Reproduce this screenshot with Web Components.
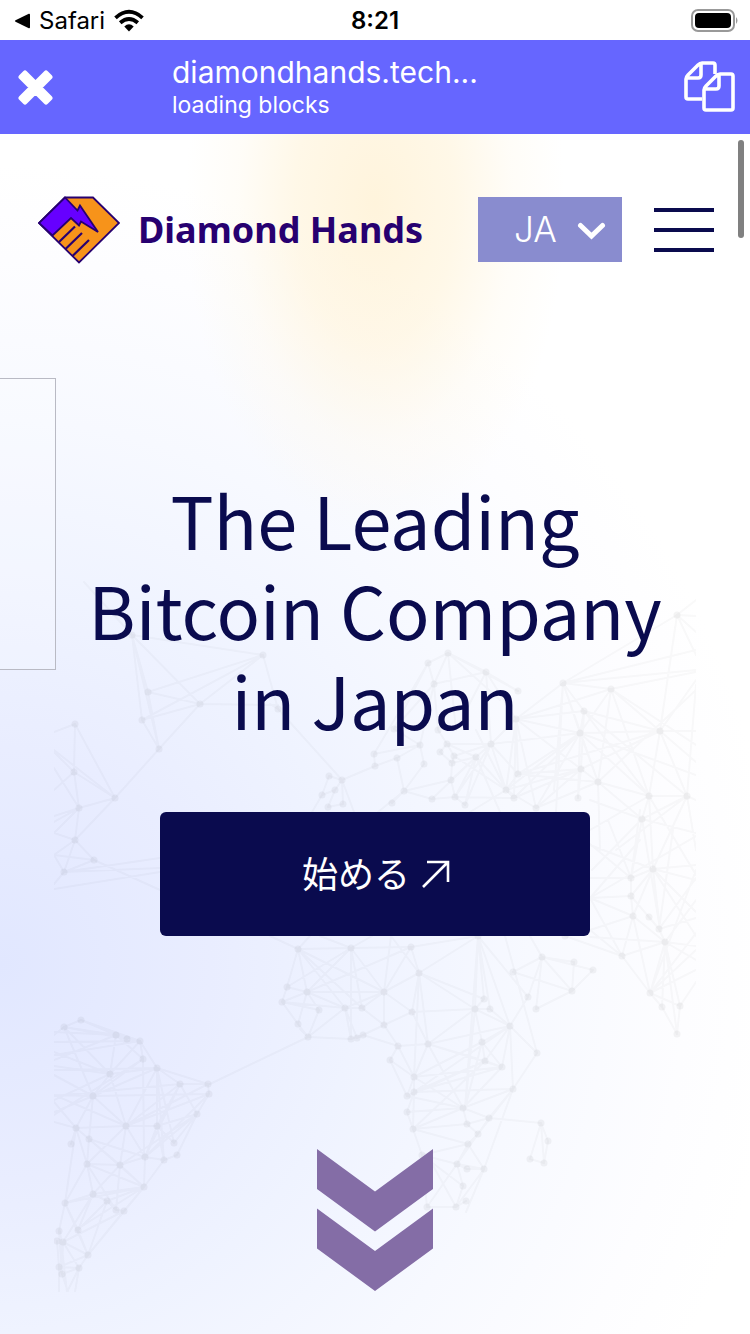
<!DOCTYPE html>
<html lang="ja">
<head>
<meta charset="utf-8">
<meta name="viewport" content="width=device-width, initial-scale=1">
<title>Diamond Hands</title>
<style>
  body { margin: 0; font-family: Inter, "Noto Sans CJK JP", sans-serif; background: #fff; color: #0a0b4e; }
</style>
</head>
<body>
<phone-screen>
  <status-bar></status-bar>
  <browser-bar><span slot="address">diamondhands.tech...</span><span slot="state">loading blocks</span></browser-bar>
  <hero-section>
    <world-map slot="backdrop"></world-map>
    <site-header slot="header">Diamond Hands</site-header>
    <span slot="title">The Leading Bitcoin Company in Japan</span>
    <start-button slot="action">始める</start-button>
    <scroll-hint slot="hint"></scroll-hint>
  </hero-section>
</phone-screen>
<script>
const define = (name, html) => {
  const template = document.createElement('template');
  template.innerHTML = html;
  customElements.define(name, class extends HTMLElement {
    constructor() {
      super();
      this.attachShadow({ mode: 'open' }).append(template.content.cloneNode(true));
    }
  });
};

define('phone-screen', `
<style>:host { display: flex; flex-direction: column; min-height: 100vh; } </style>
<slot></slot>`);

define('status-bar', `
<style>
  :host { display: grid; grid-template-columns: 1fr auto 1fr; align-items: center; height: 40px; padding: 0 11px; color: #000; font-size: 24px; line-height: 42px; }
  .back { display: flex; align-items: center; gap: 8px; padding-left: 3px; }
  .time { font-weight: 600; }
  .battery { justify-self: end; }
  svg { display: block; }
</style>
<div class="back">
  <svg width="17" height="16" viewBox="0 0 17 16"><path d="M1.5 7.2 14.8.8Q16 .4 16 1.800V14.200Q16 15.600 14.800 15.200L1.500 8.800Q.2 8 1.500 7.200Z"/></svg>
  <span>Safari</span>
  <svg width="32" height="24" viewBox="0 0 32 24"><g fill="none" stroke="#000" stroke-width="3.800"><path d="M2.500 8.800Q16-3.200 29.500 8.800"/><path d="M7.200 13.800Q16 6.200 24.800 13.800"/></g><path d="M11.300 17.400Q16 13.200 20.700 17.400L16 22.600Z"/></svg>
</div>
<span class="time">8:21</span>
<svg class="battery" width="48" height="24" viewBox="0 0 48 24"><rect x="1" y="1" width="42" height="21" rx="6" fill="none" stroke="#999" stroke-width="2"/><rect x="4" y="4" width="36" height="15" rx="4"/><path d="M45 8q3 3.500 0 7Z" fill="#999"/></svg>`);

define('browser-bar', `
<style>
  :host { display: flex; align-items: center; height: 94px; padding: 0 15px 0 18px; background: #66f; color: #fff; }
  button { display: block; border: 0; padding: 0; background: none; color: inherit; }
  svg { display: block; }
  .page { flex: 1; margin-left: 119px; }
  .address { font-size: 30px; line-height: 36px; }
  .state { font-size: 23px; line-height: 30px; }
</style>
<button aria-label="Close"><svg width="35" height="35" viewBox="0 0 35 35"><path d="M7 3 17.500 13.500 28 3 32 7 21.500 17.500 32 28 28 32 17.500 21.500 7 32 3 28 13.500 17.500 3 7Z" fill="#fff" stroke="#fff" stroke-width="5" stroke-linejoin="round"/></svg></button>
<div class="page"><div class="address"><slot name="address"></slot></div><div class="state"><slot name="state"></slot></div></div>
<button aria-label="Tabs"><svg width="51" height="53" viewBox="0 0 51 53" fill="none" stroke="#fff" stroke-width="3.600" stroke-linejoin="round"><path d="M18 38H4Q2 38 2 36V18Q2 16 4 14L14 4Q16 2 18 2H29Q31 2 31 4V13M2 17H14Q17 17 17 14V2"/><path d="M49 15Q49 13 47 13H36Q34 13 32 15L22 25Q20 27 20 29V47Q20 49 22 49H47Q49 49 49 47ZM20 28H32Q35 28 35 25V13"/></svg></button>`);

define('hero-section', `
<style>
  :host { display: grid; flex: 1; position: relative; overflow: hidden;
    background:
      radial-gradient(ellipse 190px 330px at 375px 70px, rgba(255,242,214,.85), rgba(255,243,216,.6) 42%, rgba(255,246,226,.26) 72%, rgba(255,250,240,0)),
      radial-gradient(ellipse 780px 800px at 0 830px, #e1e7ff, #e9edff 27%, #eff3ff 46%, #f7f9ff 68%, #fdfdff 88%, #fff); }
  .content, .backdrop, .frame { grid-area: 1 / 1; min-width: 0; }
  .backdrop { margin: 446px 54px 0; }
  .frame { box-sizing: border-box; justify-self: start; align-self: start; width: 56px; height: 292px; margin-top: 244px; border: 1px solid #b9bac4; border-left: 0; background: rgba(255,255,255,.2); }
  .content { display: flex; flex-direction: column; align-items: center; padding: 62px 0 43px; z-index: 1; }
  .header { align-self: stretch; }
  h1 { box-sizing: border-box; max-width: 640px; margin: 211px 0 68px; font: 400 72px/90px "Noto Sans CJK JP", sans-serif; text-align: center; }
  .hint { margin-top: auto; padding-top: 48px; }
  .scrollbar { position: absolute; top: 6px; right: 6px; width: 6px; height: 98px; border-radius: 3px; background: #808080; z-index: 2; }
</style>
<div class="backdrop"><slot name="backdrop"></slot></div>
<div class="frame"></div>
<div class="content">
  <div class="header"><slot name="header"></slot></div>
  <h1><slot name="title"></slot></h1>
  <slot name="action"></slot>
  <div class="hint"><slot name="hint"></slot></div>
</div>
<div class="scrollbar"></div>`);

define('site-header', `
<style>
  :host { display: flex; align-items: center; height: 67px; padding: 0 36px 0 38px; }
  a { display: flex; align-items: center; gap: 18px; margin-right: auto; color: #270070; text-decoration: none; font: 700 36px/68px "Noto Sans", sans-serif; white-space: nowrap; }
  svg { display: block; }
  .language { display: grid; align-items: center; width: 144px; height: 65px; background: #898ccf; color: #fff; }
  select { grid-area: 1 / 1; appearance: none; width: 100%; height: 100%; margin: 0; padding: 0 36px; border: 0; border-radius: 0; background: none; color: inherit; font: 300 35px/65px Inter, sans-serif; }
  .language svg { grid-area: 1 / 1; justify-self: end; margin-right: 16px; pointer-events: none; }
  .menu { display: flex; flex-direction: column; gap: 16px; width: 60px; margin-left: 32px; padding: 0; border: 0; background: none; }
  .menu i { display: block; width: 100%; height: 4px; background: #0a0b4e; }
</style>
<a href="#">
  <svg width="82" height="68" viewBox="0 0 82 68" stroke="#270070" stroke-width="1.800" stroke-linejoin="miter"><path d="M27 1.500H55L81 27 41 66.500 1 27Z" fill="#f7931a"/><path d="M27 1.500 1 27 14.500 39.500 33 22 41 29.500 43 25.500 60 36 42 9.500 39.500 14.500Z" fill="#60f"/><path d="M21 46 37 30.500M27.500 53 44 37M34.500 60 51 44" fill="none" stroke-width="2.200"/></svg>
  <slot></slot>
</a>
<div class="language">
  <select aria-label="Language"><option>JA</option><option>EN</option></select>
  <svg width="29" height="20" viewBox="0 0 29 20"><path d="M3.500 5.500 14.500 16 25.500 5.500" fill="none" stroke="#fff" stroke-width="5" stroke-linecap="round"/></svg>
</div>
<button class="menu" aria-label="Menu"><i></i><i></i><i></i></button>`);

define('start-button', `
<style>
  :host { display: block; }
  button { box-sizing: border-box; display: flex; align-items: center; justify-content: center; gap: 12px; width: 430px; max-width: 100vw; height: 124px; padding: 0 0 4px 2px; border: 0; border-radius: 6px; background: #0a0b4e; color: #fff; font: 400 36px/52px "Noto Sans CJK JP", sans-serif; }
  svg { display: block; margin-top: 4px; }
</style>
<button><slot></slot><svg width="28" height="28" viewBox="0 0 28 28"><path d="M1 27 26 2M5 2H26V22" fill="none" stroke="#fff" stroke-width="2.600"/></svg></button>`);

define('scroll-hint', `
<style>:host { display: block; } svg { display: block; }</style>
<svg width="118" height="142" viewBox="0 0 118 142" fill="#846da6"><path d="M1 0 59 42.500 117 0V40L59 82.500 1 40ZM1 59.500 59 102 117 59.500V99.500L59 142 1 99.500Z"/></svg>`);

/* Network map: each row is a hub followed by the points it is joined to. */
const links = [
  // North America
  [132,635, 84,582, 263,655, 148,692, 142,720, 159,749, 200,704],
  [263,655, 148,692, 142,720, 200,704], [200,704, 148,692, 142,720, 159,749, 278,705],
  [159,749, 142,720, 148,692, 115,798], [75,724, 54,732, 74,772, 115,798],
  [74,772, 54,752, 54,790, 79,808, 115,798], [79,808, 54,768, 54,816, 54,822, 54,833, 75,840, 115,798],
  [75,840, 54,833, 54,855, 64,872, 94,860, 115,798], [94,860, 54,855, 64,872, 160,890],
  [64,872, 54,855, 54,884, 160,858, 160,868], [54,889, 160,872], [115,798, 54,750],
  [278,709, 263,655, 270,704, 342,780],
  // Europe
  [448,653, 428,663, 486,672, 434,684, 456,730, 518,691, 500,700], [428,663, 374,754, 434,684, 394,729],
  [486,672, 434,684, 518,691, 516,719, 456,730], [434,684, 394,729, 420,745, 438,730],
  [420,745, 374,754, 397,758, 424,764, 394,729], [375,766, 374,754, 397,758, 342,780],
  [404,791, 397,758, 424,764, 392,803, 378,812, 451,780, 432,799],
  [342,780, 329,776, 335,790, 343,804, 354,812], [322,795, 329,776, 335,790, 312,812], [328,807, 335,790, 343,804],
  [447,744, 438,730, 440,752, 454,756, 491,744, 476,757], [452,763, 454,756, 440,752, 451,780, 476,757],
  [491,744, 486,672, 516,719, 476,757, 518,774, 506,790, 465,805, 455,797, 454,756, 580,733],
  [476,757, 455,797, 465,805, 451,780, 506,790, 432,799, 500,812], [455,797, 451,780, 432,799, 465,805, 514,798],
  [506,790, 518,774, 514,798, 476,730, 516,719, 581,769, 470,812, 536,808, 580,733, 454,756],
  // Asia
  [677,615, 696,600, 696,616, 563,683, 696,655, 696,632, 660,731], [563,683, 696,650, 696,670, 611,689, 584,711, 580,733, 516,719, 598,782, 554,790, 556,812],
  [611,689, 696,672, 516,719, 580,733, 660,731, 696,745, 598,782, 649,796],
  [584,711, 516,719, 580,733, 581,769, 660,731, 649,796, 687,796], [660,731, 580,733, 696,680, 696,731, 696,762, 649,796, 687,796, 518,774, 581,769],
  [580,733, 516,719, 518,774, 514,798, 598,782, 578,798, 696,775, 536,808, 649,796],
  [516,719, 518,774, 514,798, 581,769, 536,808, 491,744], [581,769, 518,774, 578,798, 598,782, 514,798, 536,808],
  [598,782, 518,774, 649,796, 536,808, 642,819, 696,690, 600,850], [649,796, 687,796, 642,819, 590,830, 653,869, 696,875],
  [687,796, 696,685, 696,800, 642,819, 653,869, 671,830, 696,850, 616,850], [642,819, 590,800, 696,833, 592,870, 631,878, 660,929],
  [653,869, 590,845, 631,878, 631,896, 660,929, 696,865, 696,880, 696,912, 633,916, 696,936],
  [631,878, 590,844, 590,878, 631,896, 608,820, 640,810], [590,898, 631,896, 633,916, 622,956, 640,840, 696,836],
  [633,916, 590,930, 631,896, 622,956, 650,993, 665,942], [659,929, 649,917, 673,830, 696,878, 696,918, 631,896, 665,942],
  [665,942, 590,937, 622,956, 650,993, 662,1007, 677,1034, 696,946, 696,960, 696,900], [650,993, 622,956, 662,1007, 696,950, 696,970, 680,1006],
  [680,1006, 665,942, 677,1034, 696,982], [662,1007, 677,1034], [622,956, 565,936, 590,898, 590,930], [650,993, 696,870, 696,933],
  // Arabia and Africa
  [542,957, 513,972, 528,997, 536,1009, 574,962, 593,970, 572,991, 530,936], [572,991, 574,962, 513,972, 593,970, 536,1009, 542,957],
  [298,949, 270,936, 287,987, 307,992, 310,936, 345,1008, 362,1008, 384,992, 351,948],
  [351,948, 307,992, 287,987, 384,992, 351,1039, 362,1008, 410,947, 320,936, 372,936],
  [411,947, 307,992, 384,992, 419,973, 478,936], [287,987, 282,1002, 307,992],
  [307,992, 282,1002, 319,1010, 384,992, 298,1024], [282,1002, 298,1024, 319,1010, 345,1008],
  [308,1037, 300,1029, 345,1008, 319,1010, 298,1024, 351,1039, 210,1084], [345,1008, 351,1039, 362,1008, 357,1038, 307,992],
  [384,992, 419,973, 345,1008, 362,1008, 412,1012, 384,1025, 391,936], [384,1025, 362,1008, 363,1035, 412,1012, 398,1046],
  [363,1035, 351,1039, 357,1038, 398,1046], [419,973, 391,936, 478,936, 475,1009, 412,1012, 428,1044, 414,1077, 484,999],
  [478,936, 419,973, 484,999, 475,1009, 490,1009, 510,1026, 465,1108, 528,997], [537,1053, 505,936, 510,1026, 513,1089],
  [475,1009, 490,1009, 484,999, 412,1012, 428,1044, 482,1042, 465,1108, 510,1026],
  [510,1026, 482,1042, 428,1044, 502,1067, 513,1089, 490,1009, 528,997, 408,1096],
  [482,1042, 485,1061, 475,1009, 502,1067, 414,1077, 465,1108], [485,1061, 428,1044, 502,1067, 408,1096, 414,1092, 510,1026],
  [428,1044, 398,1046, 412,1012, 414,1077, 463,1108, 502,1067], [390,1060, 398,1046, 414,1077, 407,1096],
  [414,1077, 398,1046, 407,1096, 414,1092, 463,1108, 502,1067], [414,1092, 407,1096, 407,1112, 413,1129, 513,1089, 502,1067],
  [463,1108, 407,1112, 407,1096, 413,1129, 467,1124, 502,1067, 513,1089, 489,1118],
  [413,1129, 407,1112, 422,1155, 467,1124, 463,1108, 468,1144, 485,1061],
  [489,1118, 467,1124, 478,1134, 541,1123, 513,1089], [478,1134, 468,1144, 457,1164, 467,1124, 513,1089],
  [484,1169, 468,1144, 467,1169, 457,1164, 466,1212, 513,1089], [457,1164, 463,1186, 427,1207, 422,1155, 467,1169, 468,1144],
  [456,1207, 427,1207, 463,1186, 466,1201, 430,1160, 484,1169], [422,1155, 468,1144, 463,1186, 427,1207],
  [541,1123, 530,1159, 548,1141, 544,1163], [544,1163, 530,1159, 548,1141],
  // South America
  [81,1020, 64,1027, 116,1035, 140,1041], [64,1027, 54,1035, 116,1035, 110,1074, 93,1096, 127,1039],
  [116,1035, 54,1032, 127,1039, 110,1074, 54,1060, 140,1041], [140,1041, 54,1042, 54,1055, 143,1059, 157,1068, 110,1074],
  [143,1059, 54,1115, 93,1096, 144,1157, 116,1035], [157,1068, 54,1070, 93,1096, 126,1126, 157,1126, 180,1084, 208,1084, 164,1160, 174,1143],
  [110,1074, 54,1052, 54,1066, 54,1100, 93,1096, 126,1126, 157,1068], [93,1096, 54,1075, 54,1095, 54,1112, 76,1128, 126,1126, 209,1094, 89,1139],
  [76,1128, 54,1102, 54,1122, 93,1096, 126,1126, 89,1139, 87,1164, 65,1203, 71,1144],
  [126,1126, 180,1084, 209,1094, 208,1084, 157,1126, 145,1157, 120,1165, 87,1164, 157,1068, 54,1095],
  [180,1084, 54,1096, 208,1084, 145,1157, 197,1114], [209,1094, 208,1084, 197,1114, 126,1126, 145,1157],
  [197,1114, 157,1126, 145,1157, 174,1143, 177,1155, 120,1165], [157,1126, 145,1157, 164,1160, 174,1143, 180,1084],
  [89,1139, 87,1164, 145,1157, 120,1165, 93,1096], [145,1157, 144,1187, 164,1160, 120,1165, 89,1139],
  [164,1160, 177,1155, 144,1187], [144,1187, 87,1164, 93,1194, 107,1201, 124,1211, 120,1165, 89,1139, 65,1203, 76,1230],
  [120,1165, 93,1194, 116,1210, 87,1164], [87,1164, 65,1203, 93,1194, 116,1210], [93,1194, 65,1203, 78,1230, 107,1201, 63,1242],
  [65,1203, 59,1231, 78,1230, 88,1255], [107,1201, 78,1230, 88,1255, 116,1210], [124,1211, 88,1255, 63,1242, 116,1210],
  [88,1255, 63,1242, 78,1230, 59,1267, 144,1187, 79,1268], [59,1267, 57,1241, 62,1274, 79,1268, 59,1292],
  [62,1274, 79,1268, 63,1242, 68,1292, 59,1231], [67,1292, 60,1231, 79,1268], [79,1268, 75,1292, 63,1242]
];
const at = (x, y) => x + ' ' + y;
const dots = new Set();
let lines = '';
for (const row of links) {
  const [x, y, ...ends] = row;
  for (let i = 0; i < ends.length; i += 2) lines += 'M' + at(x, y) + 'L' + at(ends[i], ends[i + 1]);
  dots.add(at(x, y));
}
const extraDots = '148 692,142 720,374 754,397 758,424 764,394 729,438 730,440 752,454 756,451 780,432 799,465 805,392 803,329 776,335 790,343 804,518 691,518 774,514 798,536 808,578 798,631 896,649 917,513 972,528 997,536 1009,574 962,593 970,319 1010,362 1008,412 1012,351 1039,357 1038,298 1024,398 1046,484 999,490 1009,502 1067,407 1096,407 1112,467 1124,513 1089,468 1144,467 1169,463 1186,466 1201,427 1207,530 1159,548 1141,565 936,127 1039,208 1084,174 1143,177 1155,71 1144,116 1210,78 1230,63 1242,57 1241,59 1231,677 1034';
extraDots.split(',').forEach(d => dots.add(d));
['54 889', '590 898', '67 1292'].forEach(d => dots.delete(d));

define('world-map', `
<style>:host { display: block; } svg { display: block; width: 100%; height: auto; } path { fill: none; stroke: #222; stroke-linecap: round; }</style>
<svg viewBox="54 580 642 712" aria-hidden="true">
  <path d="${lines}" stroke-width="2" opacity=".028"/>
  <path d="${[...dots].map(d => 'M' + d + 'h0').join('')}" stroke-width="7" opacity=".05"/>
</svg>`);
</script>
</body>
</html>
